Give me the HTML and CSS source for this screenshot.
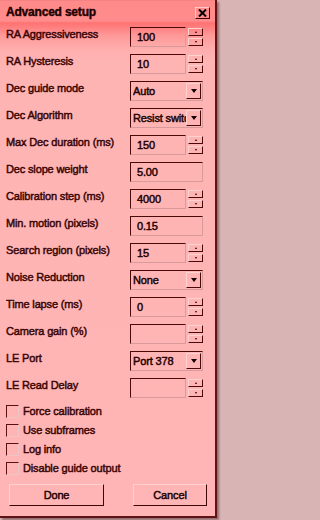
FILE: index.html
```html
<!DOCTYPE html>
<html>
<head>
<meta charset="utf-8">
<link rel="stylesheet" href="styles.css">
</head>
<body>
<div class="window">
  <div class="titlebar">
    <span class="title">Advanced setup</span>
    <span class="close"><svg width="9" height="8" viewBox="0 0 9 8"><path d="M1 0.5 L8 7.5 M8 0.5 L1 7.5" stroke="#000" stroke-width="2"/></svg></span>
  </div>
  <div class="form">
    <div class="row"><span class="label">RA Aggressiveness</span><span class="edit">100</span><span class="spin"><span class="sb"><i class="up"></i></span><span class="sb"><i class="down"></i></span></span></div>
    <div class="row"><span class="label">RA Hysteresis</span><span class="edit">10</span><span class="spin"><span class="sb"><i class="up"></i></span><span class="sb"><i class="down"></i></span></span></div>
    <div class="row"><span class="label">Dec guide mode</span><span class="combo"><span class="ctext">Auto</span><span class="drop"><i class="arrow"></i></span></span></div>
    <div class="row"><span class="label">Dec Algorithm</span><span class="combo"><span class="ctext">Resist switching</span><span class="drop"><i class="arrow"></i></span></span></div>
    <div class="row"><span class="label">Max Dec duration (ms)</span><span class="edit">150</span><span class="spin"><span class="sb"><i class="up"></i></span><span class="sb"><i class="down"></i></span></span></div>
    <div class="row"><span class="label">Dec slope weight</span><span class="edit wide">5.00</span></div>
    <div class="row"><span class="label">Calibration step (ms)</span><span class="edit">4000</span><span class="spin"><span class="sb"><i class="up"></i></span><span class="sb"><i class="down"></i></span></span></div>
    <div class="row"><span class="label">Min. motion (pixels)</span><span class="edit wide">0.15</span></div>
    <div class="row"><span class="label">Search region (pixels)</span><span class="edit">15</span><span class="spin"><span class="sb"><i class="up"></i></span><span class="sb"><i class="down"></i></span></span></div>
    <div class="row"><span class="label">Noise Reduction</span><span class="combo"><span class="ctext">None</span><span class="drop"><i class="arrow"></i></span></span></div>
    <div class="row"><span class="label">Time lapse (ms)</span><span class="edit">0</span><span class="spin"><span class="sb"><i class="up"></i></span><span class="sb"><i class="down"></i></span></span></div>
    <div class="row"><span class="label">Camera gain (%)</span><span class="edit"></span><span class="spin"><span class="sb"><i class="up"></i></span><span class="sb"><i class="down"></i></span></span></div>
    <div class="row"><span class="label">LE Port</span><span class="combo"><span class="ctext">Port 378</span><span class="drop"><i class="arrow"></i></span></span></div>
    <div class="row"><span class="label">LE Read Delay</span><span class="edit"></span><span class="spin"><span class="sb"><i class="up"></i></span><span class="sb"><i class="down"></i></span></span></div>
  </div>
  <div class="checks">
    <div class="check"><span class="box"></span><span>Force calibration</span></div>
    <div class="check"><span class="box"></span><span>Use subframes</span></div>
    <div class="check"><span class="box"></span><span>Log info</span></div>
    <div class="check"><span class="box"></span><span>Disable guide output</span></div>
  </div>
  <div class="buttons">
    <span class="btn done">Done</span>
    <span class="btn cancel">Cancel</span>
  </div>
</div>
</body>
</html>
```

FILE: styles.css
```css
* { box-sizing: border-box; }
html, body { margin: 0; padding: 0; }
html { background: #d8b4b4; }
body {
  width: 221px;
  height: 520px;
  overflow: hidden;
  background: #d8b4b4;
  font-family: "Liberation Sans", Arial, sans-serif;
  font-size: 11px;
  color: #380404;
  -webkit-text-stroke: 0.45px #380404;
  letter-spacing: -0.15px;
}
.window {
  width: 217px;
  height: 518px;
  display: flex;
  flex-direction: column;
  border-right: 2px solid #5e1414;
  border-bottom: 2px solid #5e1414;
  box-shadow: 2px 2px 2px rgba(90, 50, 50, 0.55);
  background: linear-gradient(to bottom,
    #ec7c7c 0, #ff8a8a 1px, #ff8c8c 21px, #ff7272 23px,
    #ff9a9a 36px, #ffaeae 50px, #ffb4b4 62px, #ffb5b5 100%);
}
.titlebar {
  height: 22px;
  display: flex;
  justify-content: space-between;
  align-items: flex-start;
  padding: 0 5px 0 6px;
}
.title {
  margin-top: 5px;
  font-size: 12px;
  line-height: 14px;
  font-weight: bold;
  letter-spacing: -0.2px;
  color: #1e0000;
  -webkit-text-stroke: 0.4px #1e0000;
}
.close {
  margin-top: 7px;
  width: 15px;
  height: 12px;
  display: flex;
  align-items: center;
  justify-content: center;
  border: 1px solid;
  border-color: #ffc8c8 #3c0606 #3c0606 #ffc8c8;
}
.form {
  display: flex;
  flex-direction: column;
  gap: 7px;
  padding-top: 5px;
}
.row {
  display: flex;
  height: 20px;
  padding-left: 6px;
}
.label {
  width: 124px;
  padding-top: 1px;
  line-height: 13px;
  white-space: nowrap;
}
.edit {
  width: 56px;
  height: 20px;
  padding-left: 6px;
  line-height: 18px;
  border: 1px solid;
  border-color: #4a0808 #d89a9a #d89a9a #4a0808;
  color: #200000;
  -webkit-text-stroke: 0.45px #200000;
}
.edit.wide { width: 73px; }
.spin {
  width: 15px;
  margin-left: 2px;
  padding-top: 1px;
  display: flex;
  flex-direction: column;
  gap: 2px;
}
.sb {
  height: 8px;
  display: flex;
  align-items: center;
  justify-content: center;
  border: 1px solid;
  border-color: #ffd2d2 #4a0808 #4a0808 #ffd2d2;
}
.up, .down {
  display: block;
  width: 0;
  height: 0;
  border-left: 1.5px solid transparent;
  border-right: 1.5px solid transparent;
}
.up { border-bottom: 2px solid #200000; }
.down { border-top: 2px solid #200000; }
.combo {
  width: 73px;
  height: 20px;
  display: flex;
  border: 1px solid;
  border-color: #4a0808 #d89a9a #d89a9a #4a0808;
  padding: 1px 1px 1px 2px;
}
.ctext {
  flex: 1;
  overflow: hidden;
  white-space: nowrap;
  line-height: 16px;
  color: #200000;
  -webkit-text-stroke: 0.45px #200000;
}
.drop {
  width: 15px;
  display: flex;
  align-items: center;
  justify-content: center;
  border: 1px solid;
  border-color: #ffd2d2 #4a0808 #4a0808 #ffd2d2;
}
.arrow {
  display: block;
  width: 0;
  height: 0;
  border-left: 3.5px solid transparent;
  border-right: 3.5px solid transparent;
  border-top: 4px solid #100000;
}
.checks {
  display: flex;
  flex-direction: column;
  gap: 6px;
  margin-top: 7px;
  padding-left: 6px;
}
.check {
  display: flex;
  align-items: center;
  height: 13px;
  gap: 4px;
  line-height: 13px;
}
.box {
  width: 13px;
  height: 13px;
  border: 1px solid;
  border-color: #5a1010 #f0c4c4 #f0c4c4 #5a1010;
}
.buttons {
  display: flex;
  margin-top: 9px;
  padding-left: 9px;
  gap: 29px;
}
.btn {
  height: 22px;
  display: flex;
  align-items: center;
  justify-content: center;
  border: 1px solid;
  border-color: #ffd0d0 #3c0606 #3c0606 #ffd0d0;
  color: #200000;
  -webkit-text-stroke: 0.45px #200000;
}
.done { width: 95px; }
.cancel { width: 74px; }
```
